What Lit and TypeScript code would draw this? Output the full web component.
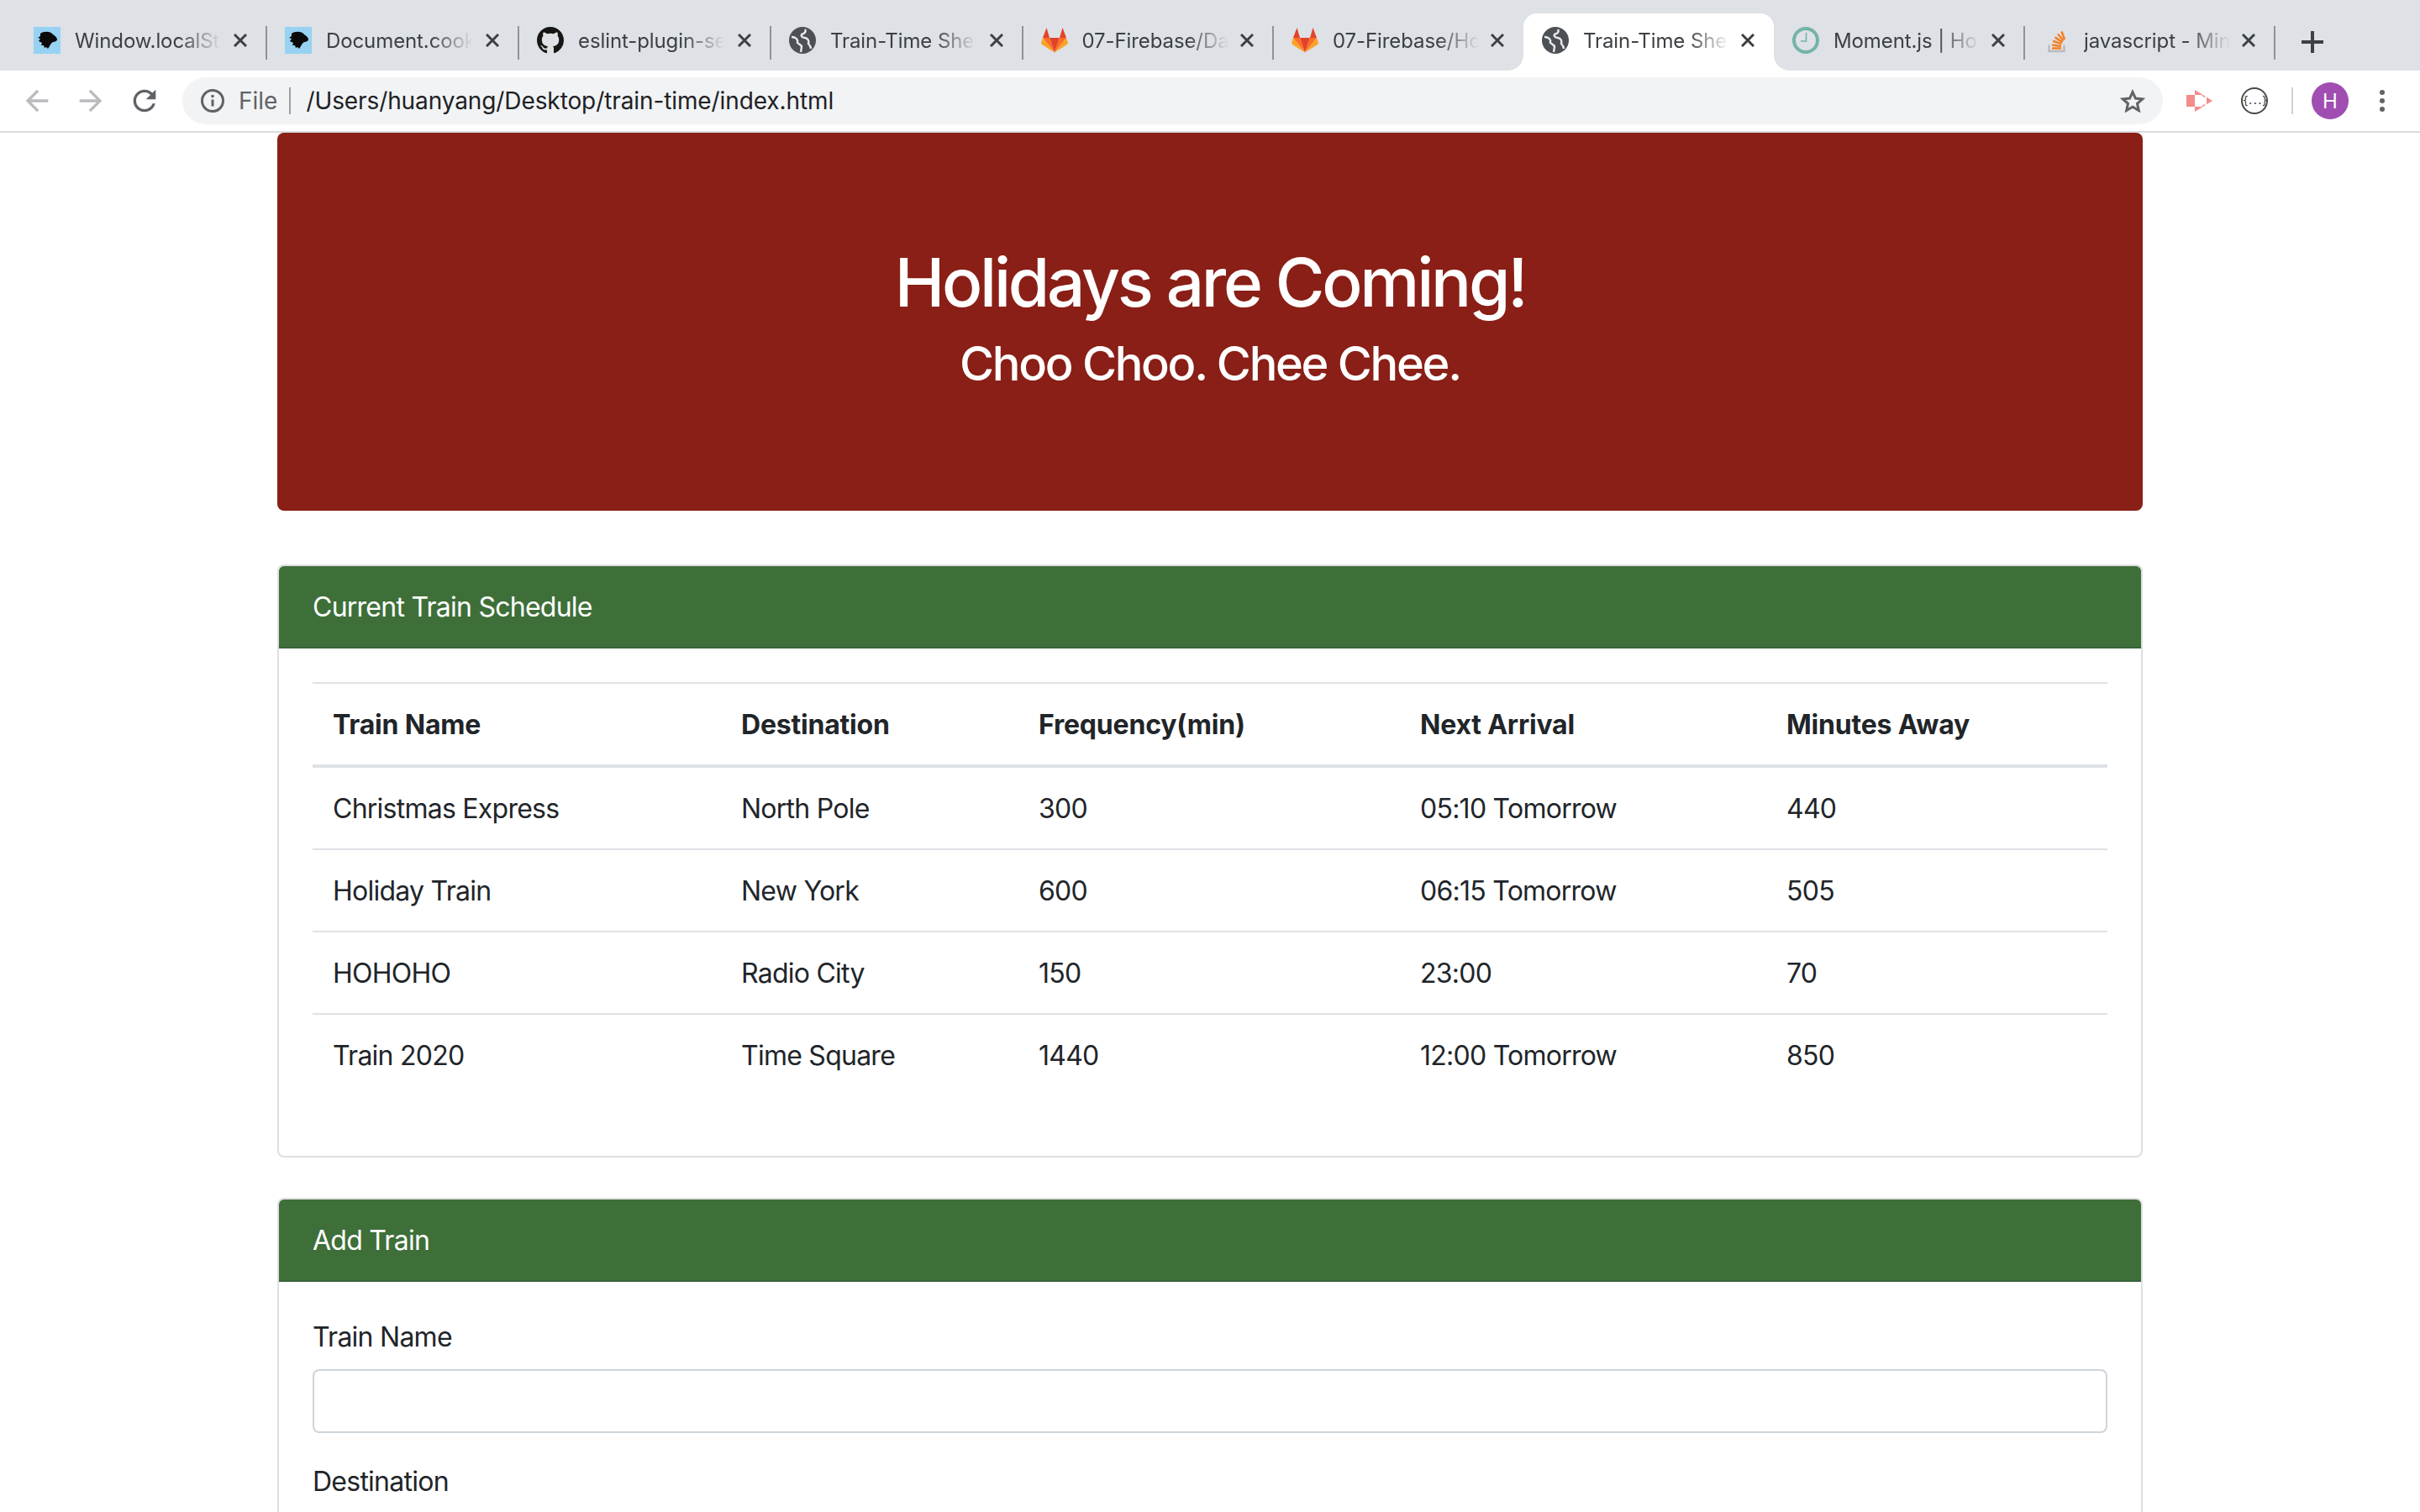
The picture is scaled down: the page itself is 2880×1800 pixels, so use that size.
import { LitElement, html, css } from "lit";
import { customElement } from "lit/decorators.js";

const dino = html`<svg viewBox="0 0 32 32" width="32" height="32"><rect width="32" height="32" fill="#97d2f3"/><path fill="#0a0a0a" d="M8 8 C12 5 20 5 23 9 C26 11 28 13 28 15 C28 17 25 18 23 18 C21 19 20 21 19 23 L17 26 L15 24 L13 25 L12 22 L9 22 L10 19 L6 17 L8 14 L5 13 L8 11 Z"/></svg>`;
const github = html`<svg viewBox="0 0 16 16" width="32" height="32"><path fill="#161614" d="M8 0C3.58 0 0 3.58 0 8c0 3.54 2.29 6.53 5.47 7.59.4.07.55-.17.55-.38 0-.19-.01-.82-.01-1.49-2.01.37-2.53-.49-2.69-.94-.09-.23-.48-.94-.82-1.13-.28-.15-.68-.52-.01-.53.63-.01 1.08.58 1.23.82.72 1.21 1.87.87 2.33.66.07-.52.28-.87.51-1.07-1.78-.2-3.64-.89-3.64-3.95 0-.87.31-1.59.82-2.15-.08-.2-.36-1.02.08-2.12 0 0 .67-.21 2.2.82.64-.18 1.32-.27 2-.27.68 0 1.36.09 2 .27 1.53-1.04 2.2-.82 2.2-.82.44 1.1.16 1.92.08 2.12.51.56.82 1.27.82 2.15 0 3.07-1.87 3.75-3.65 3.95.29.25.54.73.54 1.48 0 1.07-.01 1.93-.01 2.2 0 .21.15.46.55.38A8.013 8.013 0 0016 8c0-4.42-3.58-8-8-8z"/></svg>`;
const globeIcon = html`<svg viewBox="0 0 32 32" width="32" height="32"><circle cx="16" cy="16" r="16" fill="#4d5156"/><path d="M3 12 C8 12 11 15 10 19 C12 21 15 21 15 24 L14 30" fill="none" stroke="#e8eaed" stroke-width="2.4"/><path d="M19 3 C21 6 18 8 15 9 C14 11 16 13 19 13 C23 14 24 17 23 20 C25 22 26 24 26 26" fill="none" stroke="#e8eaed" stroke-width="2.4"/></svg>`;
const gitlab = html`<svg viewBox="0 0 32 32" width="32" height="32"><polygon fill="#e24329" points="16,30.5 10,13 22,13"/><polygon fill="#fc6d26" points="16,30.5 10,13 2,13"/><polygon fill="#fc6d26" points="16,30.5 22,13 30,13"/><polygon fill="#fca326" points="2,13 0,19 1,21 16,30.5"/><polygon fill="#fca326" points="30,13 32,19 31,21 16,30.5"/><polygon fill="#e24329" points="2,13 10,13 6.5,1"/><polygon fill="#e24329" points="22,13 30,13 25.5,1"/></svg>`;
const clock = html`<svg viewBox="0 0 32 32" width="32" height="32"><circle cx="16" cy="16" r="14" fill="none" stroke="#73b3a8" stroke-width="4"/><path d="M16.5 7v10H10" fill="none" stroke="#73b3a8" stroke-width="1.6"/></svg>`;
const stack = html`<svg viewBox="0 0 32 32" width="32" height="32"><path d="M7.5 21.5V29h18v-7.5" fill="none" stroke="#bcbbbb" stroke-width="2.4"/><g stroke="#f48024" stroke-width="2.5" fill="none"><path d="M11 25.5h11"/><path d="M11.2 21.5l10.8 1.6"/><path d="M12.2 16.8l10.2 3.6"/><path d="M14.6 12.4l9 6"/><path d="M18 8.5l6.8 8"/><path d="M22.5 5.5l3.6 9.5"/></g></svg>`;
const close = html`<svg class="x" viewBox="0 0 16 16" width="16" height="16"><path d="M1 1l14 14M15 1L1 15" stroke="#3c4043" stroke-width="3" fill="none"/></svg>`;

interface Tab { t: string; i: unknown; end: number; active?: boolean; }
const tabs: Tab[] = [
  { t: "Window.localSt", i: dino, end: 317 },
  { t: "Document.cook", i: dino, end: 617 },
  { t: "eslint-plugin-se", i: github, end: 917 },
  { t: "Train-Time She", i: globeIcon, end: 1216.5 },
  { t: "07-Firebase/Da", i: gitlab, end: 1515 },
  { t: "07-Firebase/Ho", i: gitlab, end: 1813 },
  { t: "Train-Time She", i: globeIcon, end: 2111, active: true },
  { t: "Moment.js | Ho", i: clock, end: 2409 },
  { t: "javascript - Min", i: stack, end: 2707 },
];

const rows = [
  ["Christmas Express", "North Pole", "300", "05:10 Tomorrow", "440"],
  ["Holiday Train", "New York", "600", "06:15 Tomorrow", "505"],
  ["HOHOHO", "Radio City", "150", "23:00", "70"],
  ["Train 2020", "Time Square", "1440", "12:00 Tomorrow", "850"],
];
const heads = ["Train Name", "Destination", "Frequency(min)", "Next Arrival", "Minutes Away"];

@customElement("app-root")
export class AppRoot extends LitElement {
  static styles = css`
    :host { display: block; height: 100vh; overflow: hidden; background: #fff; font-family: Inter, "Liberation Sans", sans-serif; color: #212529; }
    * { box-sizing: border-box; }

    .strip { height: 84px; background: #dee1e6; display: flex; padding-left: 18px; }
    .tab { position: relative; height: 68px; margin-top: 16px; display: flex; align-items: center; padding: 0 23px 4px 22px; flex: none; }
    .tab::after { content: ""; position: absolute; right: -1px; top: 15px; width: 2px; height: 40px; background: #8f9296; }
    .tab.noline::after, .tab.active::after { display: none; }
    .ic { width: 32px; height: 32px; flex: none; display: block; }
    .ic svg { display: block; }
    .title { width: 176px; margin-left: 17px; padding-top: 2px; flex: none; font-size: 24px; line-height: 32px; color: #3c4043; white-space: nowrap; overflow: hidden; letter-spacing: -0.1px; -webkit-mask-image: linear-gradient(90deg, #000 calc(100% - 52px), transparent calc(100% - 2px)); mask-image: linear-gradient(90deg, #000 calc(100% - 52px), transparent calc(100% - 2px)); }
    .x { flex: none; margin-left: auto; display: block; }
    .tab.active { background: #fff; border-radius: 16px 16px 0 0; }
    .tab.active::before, .flare { content: ""; position: absolute; bottom: 0; width: 18px; height: 18px; }
    .tab.active::before { left: -18px; background: radial-gradient(circle at 0 0, #dee1e6 17.5px, #fff 18px); }
    .flare { right: -18px; background: radial-gradient(circle at 100% 0, #dee1e6 17.5px, #fff 18px); }
    .plus { margin-left: 32px; width: 26px; height: 84px; display: flex; align-items: center; flex: none; padding-top: 16px; }

    .bar { height: 74px; border-bottom: 2px solid #dcdce0; display: flex; align-items: flex-start; padding: 8px 0 0 12px; background: #fff; }
    .nav { width: 64px; height: 56px; display: flex; align-items: center; justify-content: center; flex: none; }
    .omni { margin-left: 13px; width: 2357px; height: 56px; border-radius: 28px; background: #f1f3f4; display: flex; align-items: center; padding-left: 22px; flex: none; font-size: 28px; }
    .file { color: #5f6368; margin-left: 17px; line-height: 36px; }
    .osep { width: 2px; height: 32px; background: #9aa0a6; margin-left: 14px; flex: none; }
    .url { margin-left: 18px; color: #202124; line-height: 36px; white-space: nowrap; letter-spacing: -0.1px; }
    .star { margin-left: auto; margin-right: 21px; display: block; flex: none; }
    .acts { display: flex; align-items: center; height: 56px; flex: none; }
    .ext1 { margin-left: 28px; display: block; }
    .ext2 { margin-left: 33px; width: 32px; height: 32px; border-radius: 50%; border: 2px solid #4a4a4a; font-size: 12px; line-height: 1; font-family: "DejaVu Sans Mono", monospace; color: #333; display: flex; align-items: center; justify-content: center; letter-spacing: -1.5px; flex: none; }
    .bsep { width: 2px; height: 32px; background: #d0d1d3; margin-left: 28px; flex: none; }
    .avatar { margin-left: 22px; width: 44px; height: 44px; border-radius: 50%; background: #a04eb2; color: #fff; font-size: 24px; display: flex; align-items: center; justify-content: center; flex: none; }
    .dots { margin-left: 37px; width: 10px; display: flex; flex-direction: column; gap: 4px; flex: none; }
    .dots i { display: block; width: 6px; height: 6px; border-radius: 50%; background: #5f6368; }

    .page { width: 2220px; margin: 0 auto; }
    .hero { height: 450px; background: #891f16; border-radius: 8px; padding: 130px 64px 126px; margin-bottom: 64px; color: #fff; text-align: center; }
    h1 { margin: 0 0 16px; font-size: 80px; line-height: 96px; font-weight: 500; letter-spacing: -3.25px; }
    h3 { margin: 0 0 16px; font-size: 56px; line-height: 67px; font-weight: 500; letter-spacing: -2.3px; }
    .card { border: 2px solid rgba(0,0,0,.125); border-radius: 8px; margin-bottom: 48px; background: #fff; }
    .chead { height: 98px; background: #3e6f39; border-bottom: 2px solid #38633a; border-radius: 6px 6px 0 0; color: #fff; font-size: 32px; line-height: 48px; padding: 25px 40px 23px; letter-spacing: -0.75px; }
    .cbody { padding: 40px; }
    table { width: 2136px; border-collapse: collapse; table-layout: fixed; margin-bottom: 32px; font-size: 32px; line-height: 48px; color: #212529; }
    th, td { padding: 25px 24px 23px; text-align: left; border-top: 2px solid #dee2e6; letter-spacing: -0.75px; }
    th { font-weight: 700; border-bottom: 4px solid #dee2e6; letter-spacing: -0.2px; }
    .c0 { width: 486px; } .c1 { width: 354px; } .c2 { width: 454px; } .c3 { width: 436px; } .c4 { width: 406px; }
    label { display: block; font-size: 32px; line-height: 48px; padding-top: 2px; margin-bottom: 14px; height: 50px; color: #212529; letter-spacing: -0.75px; }
    .group { margin-bottom: 32px; }
    input { display: block; width: 100%; height: 76px; border: 2px solid #ced4da; border-radius: 8px; background: #fff; padding: 12px 24px; font: inherit; font-size: 32px; }
  `;

  render() {
    let start = 18;
    return html`
      <div class="strip">
        ${tabs.map((t, n) => {
          const w = t.end - start;
          start = t.end;
          const noline = tabs[n + 1]?.active;
          return html`<div class="tab ${t.active ? "active" : ""} ${noline ? "noline" : ""}" style="width:${w}px">
            <span class="ic">${t.i}</span>
            <span class="title">${t.t}</span>
            ${close}
            ${t.active ? html`<span class="flare"></span>` : ""}
          </div>`;
        })}
        <div class="plus"><svg width="26" height="26" viewBox="0 0 26 26"><path d="M13 0v26M0 13h26" stroke="#3c4043" stroke-width="4"/></svg></div>
      </div>
      <div class="bar">
        <div class="nav"><svg width="40" height="40" viewBox="0 0 24 24"><path fill="#b9bbbe" d="M20 11H7.83l5.59-5.59L12 4l-8 8 8 8 1.41-1.41L7.83 13H20v-2z"/></svg></div>
        <div class="nav"><svg width="40" height="40" viewBox="0 0 24 24"><path fill="#b9bbbe" d="M12 4l-1.41 1.41L16.17 11H4v2h12.17l-5.58 5.59L12 20l8-8z"/></svg></div>
        <div class="nav"><svg width="40" height="40" viewBox="0 0 24 24"><path fill="#5f6368" d="M17.65 6.35C16.2 4.9 14.21 4 12 4c-4.42 0-7.99 3.58-7.99 8s3.57 8 7.99 8c3.73 0 6.84-2.55 7.73-6h-2.08c-.82 2.33-3.04 4-5.65 4-3.31 0-6-2.69-6-6s2.69-6 6-6c1.66 0 3.14.69 4.22 1.78L13 11h7V4l-2.35 2.35z"/></svg></div>
        <div class="omni">
          <svg width="28" height="28" viewBox="0 0 28 28"><circle cx="14" cy="14" r="12.5" fill="none" stroke="#5f6368" stroke-width="3"/><path d="M14 12.5v8" stroke="#5f6368" stroke-width="3"/><circle cx="14" cy="8.5" r="1.8" fill="#5f6368"/></svg>
          <span class="file">File</span>
          <span class="osep"></span>
          <span class="url">/Users/huanyang/Desktop/train-time/index.html</span>
          <svg class="star" width="30" height="28" viewBox="0 0 30 28"><path d="M15 3.5l3.4 7.6 8.3.8-6.2 5.5 1.8 8.1L15 21.3l-7.3 4.2 1.8-8.1-6.2-5.5 8.3-.8z" fill="none" stroke="#5f6368" stroke-width="3"/></svg>
        </div>
        <div class="acts">
          <svg class="ext1" width="32" height="28" viewBox="0 0 32 28"><path fill="#f48c8c" d="M0 7h10V1l21 13-21 13v-6H0z"/><path fill="#fff" d="M10 7h8l3 3 3-1.5v11L21 18l-3 3h-8z"/></svg>
          <span class="ext2">{...}</span>
          <span class="bsep"></span>
          <span class="avatar">H</span>
          <span class="dots"><i></i><i></i><i></i></span>
        </div>
      </div>
      <div class="page">
        <div class="hero">
          <h1>Holidays are Coming!</h1>
          <h3>Choo Choo. Chee Chee.</h3>
        </div>
        <div class="card">
          <div class="chead">Current Train Schedule</div>
          <div class="cbody">
            <table>
              <thead><tr>${heads.map((h, i) => html`<th class="c${i}">${h}</th>`)}</tr></thead>
              <tbody>${rows.map((r) => html`<tr>${r.map((c) => html`<td>${c}</td>`)}</tr>`)}</tbody>
            </table>
          </div>
        </div>
        <div class="card">
          <div class="chead">Add Train</div>
          <div class="cbody">
            <div class="group"><label>Train Name</label><input type="text" /></div>
            <div class="group"><label>Destination</label><input type="text" /></div>
          </div>
        </div>
      </div>
    `;
  }
}
